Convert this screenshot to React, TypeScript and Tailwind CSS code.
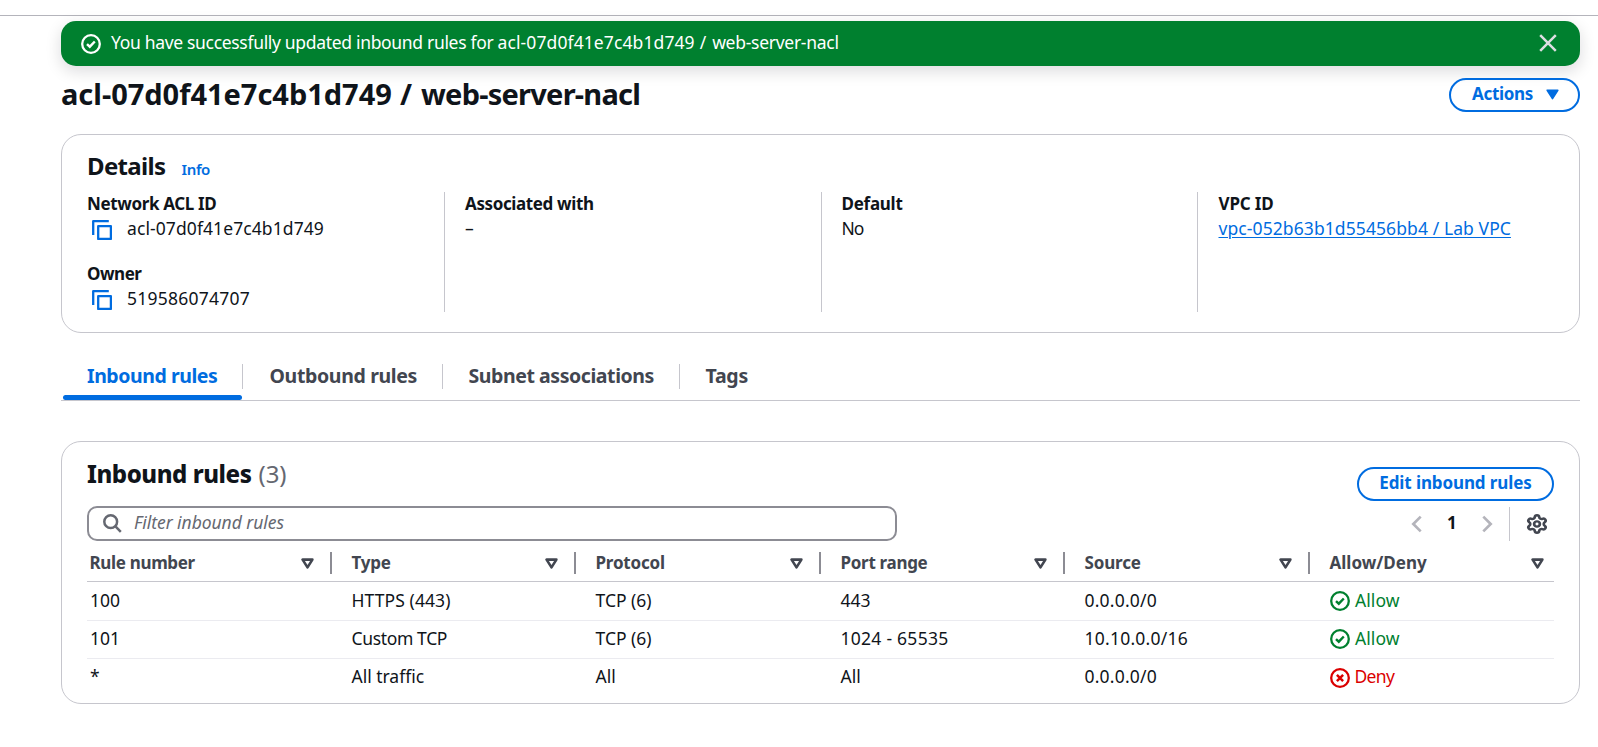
import React from "react";
import clsx from "clsx";
import { Settings } from "lucide-react";

function CheckCircle() {
  return (
    <svg className="size-5 shrink-0" viewBox="0 0 20 20" fill="none" stroke="currentColor" strokeWidth="2.3">
      <circle cx="10" cy="10" r="8.8" />
      <path d="M6 10.1 8.8 12.7 13.8 7.5" strokeWidth="2.4" />
    </svg>
  );
}

function CrossCircle() {
  return (
    <svg className="size-5 shrink-0" viewBox="0 0 20 20" fill="none" stroke="currentColor" strokeWidth="2.3">
      <circle cx="10" cy="10" r="8.8" />
      <path d="m6.9 6.9 6.2 6.2m0-6.2-6.2 6.2" strokeWidth="2.5" />
    </svg>
  );
}

function CopyIcon() {
  return (
    <svg className="ml-[5px] size-5 shrink-0 text-[#006ce0]" viewBox="0 0 20 20" fill="none" stroke="currentColor" strokeWidth="2.3" strokeLinejoin="round">
      <path d="M1.2 15V1.2H16.8" />
      <rect x="6.2" y="6.2" width="12.7" height="12.7" />
    </svg>
  );
}

function CaretFilled() {
  return (
    <svg className="h-[11px] w-[13px]" viewBox="0 0 13 11">
      <path d="M1.2 1.2h10.6L6.5 9.6Z" fill="currentColor" stroke="currentColor" strokeWidth="1.6" strokeLinejoin="round" />
    </svg>
  );
}

function CaretOutline() {
  return (
    <svg className="h-[11px] w-[13px]" viewBox="0 0 13 11">
      <path d="M1.6 1.6h9.8L6.5 9.4Z" fill="none" stroke="currentColor" strokeWidth="2.6" strokeLinejoin="round" />
    </svg>
  );
}

function Chevron({ flip }: { flip?: boolean }) {
  return (
    <svg className={clsx("h-[18px] w-[11px] text-[#b4b4bb]", flip && "-scale-x-100")} viewBox="0 0 11 18" fill="none" stroke="currentColor" strokeWidth="2.7">
      <path d="M9.7 1.6 2.3 9l7.4 7.4" />
    </svg>
  );
}

const columns = [
  { name: "Rule number", tracking: "tracking-[-0.33px]" },
  { name: "Type", tracking: "tracking-[-0.25px]" },
  { name: "Protocol", tracking: "tracking-[-0.2px]" },
  { name: "Port range", tracking: "tracking-[-0.3px]" },
  { name: "Source", tracking: "tracking-[-0.15px]" },
  { name: "Allow/Deny", tracking: "tracking-normal" },
];

const grid = "grid grid-cols-[245px_244px_245px_244px_245px_1fr]";

type Cell = [string, string];
const rules: { cells: Cell[]; allow: boolean }[] = [
  {
    cells: [
      ["100", "tracking-normal"],
      ["HTTPS (443)", "tracking-[0.09px]"],
      ["TCP (6)", "tracking-normal"],
      ["443", "tracking-normal"],
      ["0.0.0.0/0", "tracking-[0.21px]"],
    ],
    allow: true,
  },
  {
    cells: [
      ["101", "tracking-normal"],
      ["Custom TCP", "tracking-[-0.35px]"],
      ["TCP (6)", "tracking-normal"],
      ["1024 - 65535", "tracking-[0.26px]"],
      ["10.10.0.0/16", "tracking-[0.24px]"],
    ],
    allow: true,
  },
  {
    cells: [
      ["*", "tracking-normal"],
      ["All traffic", "tracking-[-0.02px]"],
      ["All", "tracking-normal"],
      ["All", "tracking-normal"],
      ["0.0.0.0/0", "tracking-[0.21px]"],
    ],
    allow: false,
  },
];

function Label({ className, children }: { className: string; children: React.ReactNode }) {
  return <dt className={clsx("h-[22px] text-[17px] leading-6 font-bold", className)}>{children}</dt>;
}

export default function App() {
  return (
    <div className="h-[747px] overflow-hidden bg-white font-['Noto_Sans','Open_Sans',sans-serif] text-[17.5px] leading-6 whitespace-nowrap text-[#0f141a]">
      <div className="h-4 border-b border-[#b4b4bb]" />
      <main className="pr-[18px] pl-[61px]">
        <div className="mt-[5px] flex h-[45px] items-start rounded-[15px] bg-[#00802f] pr-[23px] pl-5 text-white shadow-[0_5px_15px_1px_rgba(0,7,22,0.13)]">
          <div className="mt-[13px]">
            <CheckCircle />
          </div>
          <p className="mt-[9px] ml-[10px] grow tracking-[-0.32px]">
            You have successfully updated inbound rules for <span className="tracking-[0.1px]">acl-07d0f41e7c4b1d749</span>
            <span className="tracking-[0.6px]"> / </span>
            <span className="tracking-[-0.28px]">web-server-nacl</span>
          </p>
          <svg className="mt-[13px] size-[18px] text-[#dedee3]" viewBox="0 0 18 18" stroke="currentColor" strokeWidth="2.5">
            <path d="m1.2 1.2 15.6 15.6m0-15.6L1.2 16.8" />
          </svg>
        </div>

        <header className="flex h-[68px] items-start justify-between pt-[7px]">
          <h1 className="text-[29px] leading-[41px] font-bold tracking-[-0.02px]">
            acl-07d0f41e7c4b1d749<span className="tracking-[0.7px]"> / </span>
            <span className="tracking-[-0.76px]">web-server-nacl</span>
          </h1>
          <button className="mt-[5px] flex h-[34px] w-[131px] items-start justify-between rounded-full border-2 border-[#006ce0] pr-[19px] pl-[21px] text-[17px] font-bold text-[#006ce0]">
            <span className="mt-0.5 tracking-[-0.31px]">Actions</span>
            <span className="mt-[9px]">
              <CaretFilled />
            </span>
          </button>
        </header>

        <section className="h-[199px] rounded-[20px] border border-[#c6c6cd] px-[25px] pt-[13px]">
          <div className="flex h-[44px] items-baseline">
            <h2 className="text-[24px] leading-[35px] font-bold tracking-[-0.65px]">Details</h2>
            <span className="ml-4 text-[15px] font-semibold tracking-[-0.36px] text-[#006ce0]">Info</span>
          </div>
          <div className="grid h-[120px] grid-cols-[357px_377px_376px_1fr]">
            <dl>
              <Label className="tracking-[-0.36px]">Network ACL ID</Label>
              <dd className="mt-0.5 mb-[22px] flex h-6 items-end">
                <CopyIcon />
                <span className="ml-[15px] tracking-[0.09px]">acl-07d0f41e7c4b1d749</span>
              </dd>
              <Label className="tracking-[-0.46px]">Owner</Label>
              <dd className="mt-0.5 flex h-6 items-end">
                <CopyIcon />
                <span className="ml-[15px] tracking-[0.24px]">519586074707</span>
              </dd>
            </dl>
            <dl className="border-l border-[#c6c6cd] pl-5">
              <Label className="tracking-[-0.38px]">Associated with</Label>
              <dd className="mt-0.5">–</dd>
            </dl>
            <dl className="border-l border-[#c6c6cd] pl-[19.5px]">
              <Label className="tracking-[-0.26px]">Default</Label>
              <dd className="mt-0.5 tracking-[-1px]">No</dd>
            </dl>
            <dl className="border-l border-[#c6c6cd] pl-[20.5px]">
              <Label className="tracking-[-0.17px]">VPC ID</Label>
              <dd className="mt-0.5">
                <a className="tracking-[0.09px] text-[#006ce0] underline decoration-1 underline-offset-2">vpc-052b63b1d55456bb4 / Lab VPC</a>
              </dd>
            </dl>
          </div>
        </section>

        <nav className="flex h-[68px] items-start border-b border-[#c6c6cd] pt-[30px] text-[19.5px] leading-[26px] font-bold text-[#424650]">
          <div className="ml-0.5 flex h-[37px] w-[179px] flex-col justify-between text-[#006ce0]">
            <span className="pl-[24px] tracking-[-0.45px]">Inbound rules</span>
            <span className="h-[5px] rounded-[3px] bg-[#006ce0]" />
          </div>
          <span className="mt-px h-[25px] w-px bg-[#c6c6cd]" />
          <span className="w-[199px] pl-[26.5px] tracking-[-0.35px]">Outbound rules</span>
          <span className="mt-px h-[25px] w-px bg-[#c6c6cd]" />
          <span className="w-[236px] pl-[25.5px] tracking-[-0.43px]">Subnet associations</span>
          <span className="mt-px h-[25px] w-px bg-[#c6c6cd]" />
          <span className="pl-[25.5px] tracking-[-0.25px]">Tags</span>
        </nav>

        <section className="mt-10 h-[263px] rounded-[20px] border border-[#c6c6cd] px-[25px] pt-[14px]">
          <div className="flex justify-between">
            <div>
              <h2 className="h-[50px] text-[24px] leading-[35px] font-extrabold tracking-[-0.45px]">
                Inbound rules<span className="ml-[7px] font-normal tracking-normal text-[#656871]">(3)</span>
              </h2>
              <div className="flex h-[35px] w-[810px] items-start rounded-[10px] border-2 border-[#8c8c94] pl-[14px] text-[#656871]">
                <svg className="mt-[6px] size-[19px]" viewBox="0 0 19 19" fill="none" stroke="currentColor" strokeWidth="2.5">
                  <circle cx="7.7" cy="7.7" r="6.4" />
                  <path d="m12.2 12.2 5.6 5.6" />
                </svg>
                <span className="mt-0.5 ml-[12px] tracking-[-0.05px] italic">Filter inbound rules</span>
              </div>
            </div>
            <div className="flex flex-col items-end pt-[11px]">
              <button className="flex h-[34px] w-[197px] items-start justify-center rounded-full border-2 border-[#006ce0] text-[17px] font-bold tracking-[-0.11px] text-[#006ce0]">
                <span className="mt-0.5">Edit inbound rules</span>
              </button>
              <div className="mt-[6px] flex h-[34px] items-start">
                <span className="mt-[8px] mr-[25px]">
                  <Chevron />
                </span>
                <span className="mt-[5px] w-[11px] text-[17px] leading-[22px] font-bold">1</span>
                <span className="mt-[8px] ml-[24px]">
                  <Chevron flip />
                </span>
                <span className="ml-4 h-[34px] w-px bg-[#c6c6cd]" />
                <span className="mt-[6px] mr-[6px] ml-[16px]">
                  <Settings className="size-[22px] scale-x-105 scale-y-95 text-[#424650]" strokeWidth={2.8} />
                </span>
              </div>
            </div>
          </div>

          <div className={clsx(grid, "h-[41px] border-b border-[#c6c6cd] text-[17px] font-bold text-[#424650]")}>
            {columns.map(({ name, tracking }, i) => (
              <div key={name} className={clsx("flex items-start", i === 0 ? "pl-[2.5px]" : "pl-[19.5px]")}>
                <span className={clsx("mt-[10px] grow", tracking)}>{name}</span>
                <span className={clsx("mt-[17px]", i === 5 ? "mr-[10.5px]" : "mr-[16.5px]")}>
                  <CaretOutline />
                </span>
                {i < 5 && <span className="mt-[11px] h-[22px] w-0.5 bg-[#8c8c94]" />}
              </div>
            ))}
          </div>
          {rules.map(({ cells, allow }, r) => (
            <div key={r} className={clsx(grid, r === 0 ? "h-[39px] pt-[6px]" : "h-[38px] pt-[5px]", r < 2 && "border-b border-[#ebebf0]")}>
              {cells.map(([text, tracking], i) => (
                <span key={i} className={clsx(i === 0 ? "pl-[3px]" : "pl-[19.5px]", tracking)}>
                  {text}
                </span>
              ))}
              <span className={clsx("flex items-start pl-5", allow ? "text-[#00802f]" : "text-[#db0000]")}>
                <span className={allow ? "mt-[3px]" : "mt-1"}>{allow ? <CheckCircle /> : <CrossCircle />}</span>
                <span className={allow ? "ml-[5px] tracking-[0.06px]" : "ml-[4.5px] tracking-[-0.65px]"}>{allow ? "Allow" : "Deny"}</span>
              </span>
            </div>
          ))}
        </section>
      </main>
    </div>
  );
}
